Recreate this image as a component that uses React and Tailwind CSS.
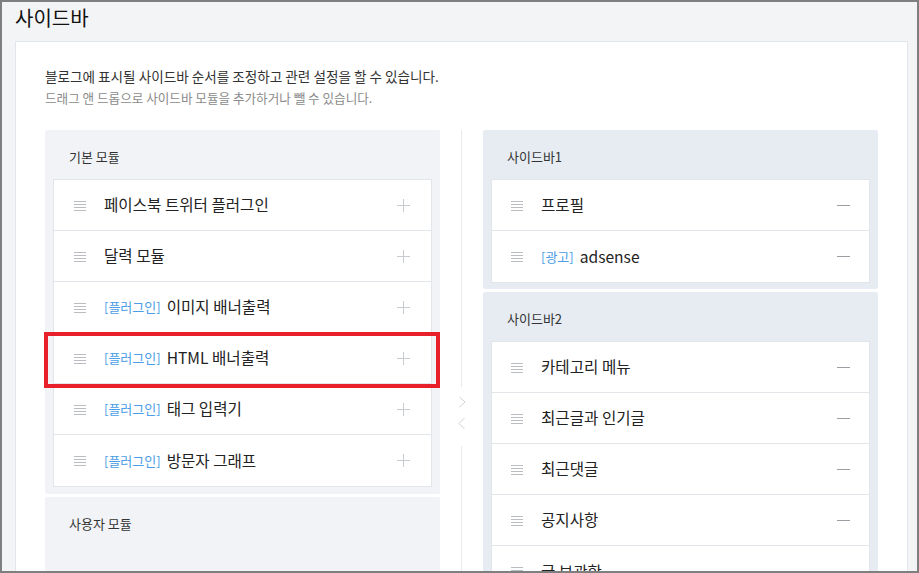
import React from "react";

const FONT = { fontFamily: '"Noto Sans CJK KR", "Noto Sans", sans-serif' };

function DragIcon() {
  return (
    <svg width="12" height="11" viewBox="0 0 12 11" className="shrink-0">
      <g stroke="#b9bcc0" strokeWidth="1">
        <line x1="0" y1="1.5" x2="12" y2="1.5" />
        <line x1="0" y1="4.5" x2="12" y2="4.5" />
        <line x1="0" y1="7.5" x2="12" y2="7.5" />
        <line x1="0" y1="10.5" x2="12" y2="10.5" />
      </g>
    </svg>
  );
}

function PlusIcon() {
  return (
    <svg width="13" height="13" viewBox="0 0 13 13" className="shrink-0">
      <g stroke="#c8cbcf" strokeWidth="1">
        <line x1="0" y1="6.5" x2="13" y2="6.5" />
        <line x1="6.5" y1="0" x2="6.5" y2="13" />
      </g>
    </svg>
  );
}

function MinusIcon() {
  return (
    <svg width="13" height="3" viewBox="0 0 13 3" className="shrink-0">
      <line x1="0" y1="1.5" x2="13" y2="1.5" stroke="#9a9da1" strokeWidth="1" />
    </svg>
  );
}

function Row({ tag, label, right }) {
  return (
    <div
      className={
        "flex items-center h-[51px] border-b border-[#e2e5ea] last:border-b-0 bg-white " +
        (right ? "pl-[19px] pr-[19px]" : "pl-[20px] pr-[21px]")
      }
    >
      <DragIcon />
      <div className="ml-[18px] flex-1 flex items-center text-[15.6px] text-[#222] whitespace-nowrap">
        {tag && <span className="text-[13px] text-[#4a9de6] mr-[6px]">{tag}</span>}
        <span>{label}</span>
      </div>
      {right ? <MinusIcon /> : <PlusIcon />}
    </div>
  );
}

function Panel({ title, items, right, pb = "pb-[7px]", children }) {
  return (
    <div className={"rounded-[2px] " + (right ? "bg-[#e6ecf2] " : "bg-[#f1f3f6] ") + pb}>
      <div className="pl-[24px] pt-[17px] pb-[12px] text-[13px] leading-[20px] text-[#333]">{title}</div>
      {items && (
        <div className="mx-[8px] border border-[#e2e5ea] bg-white">
          {items.map((it, i) => (
            <Row key={i} tag={it.tag} label={it.label} right={right} />
          ))}
        </div>
      )}
      {children}
    </div>
  );
}

export default function App() {
  const basic = [
    { label: "페이스북 트위터 플러그인" },
    { label: "달력 모듈" },
    { tag: "[플러그인]", label: "이미지 배너출력" },
    { tag: "[플러그인]", label: "HTML 배너출력" },
    { tag: "[플러그인]", label: "태그 입력기" },
    { tag: "[플러그인]", label: "방문자 그래프" },
  ];
  const sb1 = [{ label: "프로필" }, { tag: "[광고]", label: "adsense" }];
  const sb2 = [
    { label: "카테고리 메뉴" },
    { label: "최근글과 인기글" },
    { label: "최근댓글" },
    { label: "공지사항" },
    { label: "글 보관함" },
  ];

  return (
    <div
      style={FONT}
      className="relative w-[919px] h-[573px] overflow-hidden border-2 border-[#7f7f7f] bg-[#f3f4f6]"
    >
      <h1 className="pl-[13px] pt-[2px] h-[39px] text-[20px] leading-[27px] text-[#111]">사이드바</h1>
      <div className="ml-[13px] mr-[9px] border border-[#e1e5ec] bg-white pl-[29px] pr-[29px] pt-[23px]">
        <p className="text-[13.6px] leading-[22px] text-[#333]">
          블로그에 표시될 사이드바 순서를 조정하고 관련 설정을 할 수 있습니다.
        </p>
        <p className="text-[12.6px] leading-[22px] text-[#8a8a8a]">
          드래그 앤 드롭으로 사이드바 모듈을 추가하거나 뺄 수 있습니다.
        </p>
        <div className="mt-[21px] flex">
          <div className="w-[395px] flex flex-col gap-[3px]">
            <Panel title="기본 모듈" items={basic} />
            <Panel title="사용자 모듈" pb="pb-[60px]" />
          </div>
          <div className="w-[43px] flex flex-col items-center">
            <div className="w-px h-[257px] bg-[#e8eaed]" />
            <svg width="8" height="34" viewBox="0 0 8 34" className="mt-[9px]">
              <g stroke="#cfd3d8" strokeWidth="1" fill="none">
                <polyline points="1.5,1 7,6 1.5,11" />
                <polyline points="6.5,22 1,27.5 6.5,33" />
              </g>
            </svg>
            <div className="w-px h-[200px] mt-[16px] bg-[#e8eaed]" />
          </div>
          <div className="w-[395px] flex flex-col gap-[3px]">
            <Panel title="사이드바1" items={sb1} right pb="pb-[6px]" />
            <Panel title="사이드바2" items={sb2} right />
          </div>
        </div>
      </div>
      <div className="absolute left-[42px] top-[330px] w-[396px] h-[56px] border-4 border-[#e8202c]" />
    </div>
  );
}
